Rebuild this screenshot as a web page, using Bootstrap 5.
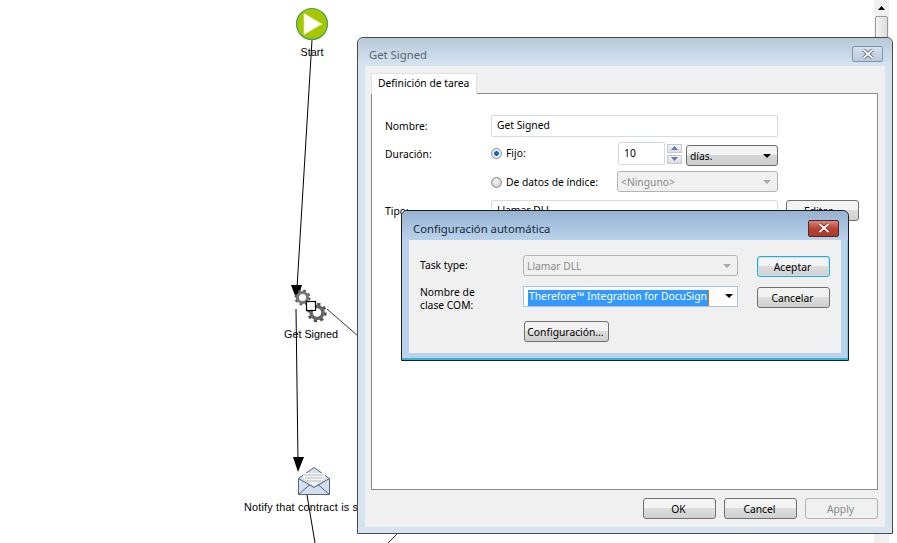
<!DOCTYPE html>
<html lang="es">
<head>
<meta charset="utf-8">
<title>Get Signed</title>
<link href="https://cdn.jsdelivr.net/npm/bootstrap@5.3.0/dist/css/bootstrap.min.css" rel="stylesheet">
<style>
html,body{margin:0;width:897px;height:543px;overflow:hidden;background:#fff}
body{font-family:"Noto Sans",sans-serif;font-size:10.3px;color:#000;position:relative}
.canvas-svg{position:absolute;left:0;top:0}
.node-label{position:absolute;font-family:"Liberation Sans",sans-serif;font-size:10.8px;line-height:12px;white-space:nowrap;transform:translateX(-50%)}
.node-left{transform:none;letter-spacing:.2px}
.vscroll{position:absolute;left:874px;top:0;width:15px;height:543px;background:#f0f0f0}
.vscroll-arrow{height:16px}
.vscroll-thumb{height:60px;margin:0 1px;border:1px solid #9a9a9a;border-radius:2px;background:linear-gradient(90deg,#f4f4f4,#dcdcdc)}
.win{position:absolute;border:1px solid #4a4a4a;border-radius:6px 6px 0 0}
.win-outer{left:357px;top:37px;width:536px;height:497px;background:#d6e4f2;padding:0 7px 6px 7px}
.win-inner{left:401px;top:210px;width:448px;height:151px;background:#b9d3ec;border-color:#1c1c1c;padding:0 7px 7px 7px;box-shadow:inset 0 -2px 0 #35b5cf,inset -1px 0 0 #7fc8d8}
.win-outer .title-bar{background:linear-gradient(#b7c8d9,#d6e4f2);margin:0 -7px;padding:8px 9px 0 11px;color:#5b6670}
.win-inner .title-bar{background:linear-gradient(#97b3d1,#b9d3ec);margin:0 -7px;padding:9px 9px 0 11px;color:#1c2a38}
.title-bar{height:28px;font-size:11.3px;line-height:18px;border-radius:6px 6px 0 0}
.win-inner .title-bar{height:29px}
.x-btn{width:31px;height:16px;border-radius:2px;border:1px solid #8294ad;background:linear-gradient(#d5e0ec,#b9c9dc)}
.win-inner .x-btn{width:31px;height:17px;border-color:#4d2a2a;background:linear-gradient(#d9877a,#b8402f 55%,#a83a2b)}
.x-btn svg{display:block;margin:1px auto 0}
.client{background:#f0f0f0}
.win-outer .client{height:461px;padding:7px 7px 0 6px}
.tab-strip{border-bottom:0;height:21px;position:relative;z-index:2}
.tab-strip .nav-link{width:106px;height:21px;padding:0 0 0 6px;font-size:10.3px;line-height:19px;color:#000;background:#fff;border:1px solid #8a8a8a;border-bottom:0;border-radius:0}
.tab-body{height:397px;background:#fff;border:1px solid #8a8a8a;margin-top:-1px;padding:21px 0 0 13px}
.lbl{width:106px;flex:none;line-height:22px}
.lbl-low{line-height:23px;height:23px;padding-top:1px}
.rw{margin-bottom:5px}
.rw-last{margin-top:7px}
.wfield{height:22px;padding:0 5px;border:1px solid #d6dbe2;border-radius:2px;background:#fff;font-size:10.3px;line-height:19px;color:#000;box-shadow:none}
.w-name{width:287px}
.w-spin{width:47px;height:23px;padding-left:5px;line-height:21px}
.spin-col{width:15px;margin:2px 4px 0 2px}
.spin-b{height:9px;border:1px solid #c4c9d2;background:linear-gradient(#f4f4f4,#dcdcdc);margin-bottom:2px}
.spin-b svg{display:block;margin:1px auto}
.radio-w{width:127px;flex:none;line-height:22px}
.radio-w.alt{width:126px}
.rad{width:11px;height:11px;border-radius:50%;border:1px solid #8a8a8a;background:radial-gradient(circle at 45% 40%,#f4f4f4,#c4c4c4);margin-right:4px;margin-top:6px;flex:none}
.rad.on{background:radial-gradient(circle,#0a73c8 0,#0f5f9e 32%,#dfe6ee 40%,#f5f5f5 100%)}
.drop{height:21px;border:1px solid #6b6b6b;border-radius:3px;background:linear-gradient(#f3f3f3 45%,#d6d6d6 50%,#cfcfcf);padding:0 6px 0 3px;line-height:20px}
.drop.dias{width:92px}
.drop.off{background:#f0f0f0;border-color:#b4b4b4;color:#8a8a8a;padding-left:3px}
.drop.ning{width:161px}
.drop.task{width:215px;margin-bottom:10px}
.caret-d{width:0;height:0;border-left:4px solid transparent;border-right:4px solid transparent;border-top:4px solid #000}
.drop.off .caret-d{border-top-color:#a8a8a8}
.w-btn{width:73px;height:21px;padding:0 2px 0 0;font-size:10.3px;line-height:18px;color:#000;border:1px solid #707070;border-radius:3px;background:linear-gradient(#f3f3f3 45%,#dddddd 50%,#cfcfcf)}
.w-btn:disabled{opacity:1;color:#8a8a8a;background:#f0f0f0;border-color:#b4b4b4}
.w-btn.dflt{border-color:#2fa6d6;box-shadow:inset 0 0 0 1px #bfe6f5}
.footer-btns{height:37px;padding:8px 0 0 0;gap:8px}
.win-inner .client{height:113px;padding:15px 0 0 11px}
.lbl2{width:103px;flex:none;line-height:13px}
.combo-edit{width:215px;height:21px;border:1px solid #a9c4e0;background:#fff;padding:3px 4px 0 4px;margin-bottom:14px;line-height:13px}
.sel-txt{background:#3399ff;color:#fff;white-space:nowrap;border-right:1px solid #e07000;padding:0 1px}
.cfg-btn{width:85px;margin-left:104px}
.side-btns{margin:1px 0 0 19px;gap:10px}
</style>
</head>
<body>
<svg class="canvas-svg" width="897" height="543" viewBox="0 0 897 543">
  <g stroke="#000" fill="none">
    <path d="M312 40L297 288"/>
    <path d="M296 309L298 462"/>
    <path d="M307 495L315 543"/>
    <path d="M327 309L358 336" stroke-width=".8"/>
    <path d="M388 543L397 534" stroke-width=".8"/>
  </g>
  <path d="M291 285H302L297 301Z"/>
  <path d="M293 457H304L298 472Z"/>
  <circle cx="312" cy="24" r="15.5" fill="#a6c600" stroke="#3f9e6c" stroke-width="1.2"/>
  <path d="M304 13.5V34.500L322 24Z" fill="#fff" stroke="#dfe98f" stroke-width=".8"/>
  <g fill="none">
    <circle cx="302.500" cy="297.500" r="6.500" stroke="#5a5a5a" stroke-width="3" stroke-dasharray="2.500 2.600"/>
    <circle cx="302.500" cy="297.500" r="5" stroke="#777" stroke-width="3"/>
    <circle cx="317" cy="312.500" r="8" stroke="#4e4e4e" stroke-width="3.500" stroke-dasharray="3 3.280"/>
    <circle cx="317" cy="312.500" r="6" stroke="#666" stroke-width="3.500"/>
  </g>
  <rect x="306.500" y="301.500" width="9" height="9" fill="#fff" stroke="#000" stroke-width="1.200"/>
  <path d="M298.500 478.500L314 467.500L329.500 478.500V494.500H298.500Z" fill="#d0dff2" stroke="#5c6470"/>
  <path d="M303 478V473H325V478L314 486Z" fill="#f4f4f4"/>
  <path d="M304 475H324M305 478H323M307 481H321" stroke="#bbb"/>
  <path d="M298.500 478.500L314 487.500L329.500 478.500M298.500 494.500L310 484.500M329.500 494.500L318 484.500" fill="none" stroke="#5c6470"/>
</svg>
<div class="node-label" style="left:312px;top:46px">Start</div>
<div class="node-label" style="left:311px;top:328px">Get Signed</div>
<div class="node-label node-left" style="left:244px;top:501px">Notify that contract is signed</div>

<div class="vscroll">
  <div class="vscroll-arrow d-flex justify-content-center align-items-center"><svg width="7" height="4"><path d="M0 4H7L3.500 0Z"/></svg></div>
  <div class="vscroll-thumb"></div>
</div>

<div class="win win-outer">
  <div class="title-bar d-flex justify-content-between align-items-start">
    <span>Get Signed</span>
    <div class="x-btn"><svg width="16" height="12" viewBox="0 0 16 12"><path d="M3.500 2L12.500 10M12.500 2L3.500 10" stroke="#4f5a68" stroke-width="3.600"/><path d="M3.500 2L12.500 10M12.500 2L3.500 10" stroke="#f4f6f8" stroke-width="2"/></svg></div>
  </div>
  <div class="client d-flex flex-column">
    <ul class="nav nav-tabs tab-strip"><li class="nav-item"><a class="nav-link active" href="#">Definición de tarea</a></li></ul>
    <div class="tab-body">
      <div class="d-flex rw"><div class="lbl">Nombre:</div><div class="form-control wfield w-name">Get Signed</div></div>
      <div class="d-flex rw">
        <div class="lbl lbl-low">Duración:</div>
        <div class="radio-w d-flex"><span class="rad on"></span><span>Fijo:</span></div>
        <div class="form-control wfield w-spin">10</div>
        <div class="spin-col">
          <div class="spin-b"><svg width="7" height="4"><path d="M0 4H7L3.500 0Z" fill="#5d78b8"/></svg></div>
          <div class="spin-b"><svg width="7" height="4"><path d="M0 0H7L3.500 4Z" fill="#5d78b8"/></svg></div>
        </div>
        <div class="drop dias d-flex justify-content-between align-items-center mt-auto"><span>días.</span><span class="caret-d"></span></div>
      </div>
      <div class="d-flex rw">
        <div class="lbl"></div>
        <div class="radio-w alt d-flex"><span class="rad"></span><span>De datos de índice:</span></div>
        <div class="drop off ning d-flex justify-content-between align-items-center"><span>&lt;Ninguno&gt;</span><span class="caret-d"></span></div>
      </div>
      <div class="d-flex rw-last">
        <div class="lbl">Tipo:</div>
        <div class="form-control wfield w-name">Llamar DLL</div>
        <button type="button" class="btn w-btn ms-2">Editar...</button>
      </div>
    </div>
    <div class="footer-btns d-flex justify-content-end">
      <button type="button" class="btn w-btn">OK</button>
      <button type="button" class="btn w-btn">Cancel</button>
      <button type="button" class="btn w-btn" disabled>Apply</button>
    </div>
  </div>
</div>

<div class="win win-inner">
  <div class="title-bar d-flex justify-content-between align-items-start">
    <span>Configuración automática</span>
    <div class="x-btn"><svg width="16" height="12" viewBox="0 0 16 12"><path d="M3.500 2L12.500 10M12.500 2L3.500 10" stroke="#6b2a22" stroke-width="3.600"/><path d="M3.500 2L12.500 10M12.500 2L3.500 10" stroke="#f7efe9" stroke-width="2"/></svg></div>
  </div>
  <div class="client d-flex">
    <div>
      <div class="d-flex"><div class="lbl2 pt-1">Task type:</div><div class="drop off task d-flex justify-content-between align-items-center"><span>Llamar DLL</span><span class="caret-d"></span></div></div>
      <div class="d-flex"><div class="lbl2">Nombre de<br>clase COM:</div><div class="combo-edit d-flex justify-content-between"><span class="sel-txt">Therefore™ Integration for DocuSign</span><span class="caret-d mt-1"></span></div></div>
      <button type="button" class="btn w-btn cfg-btn d-block">Configuración...</button>
    </div>
    <div class="side-btns d-flex flex-column">
      <button type="button" class="btn w-btn dflt">Aceptar</button>
      <button type="button" class="btn w-btn">Cancelar</button>
    </div>
  </div>
</div>
</body>
</html>
